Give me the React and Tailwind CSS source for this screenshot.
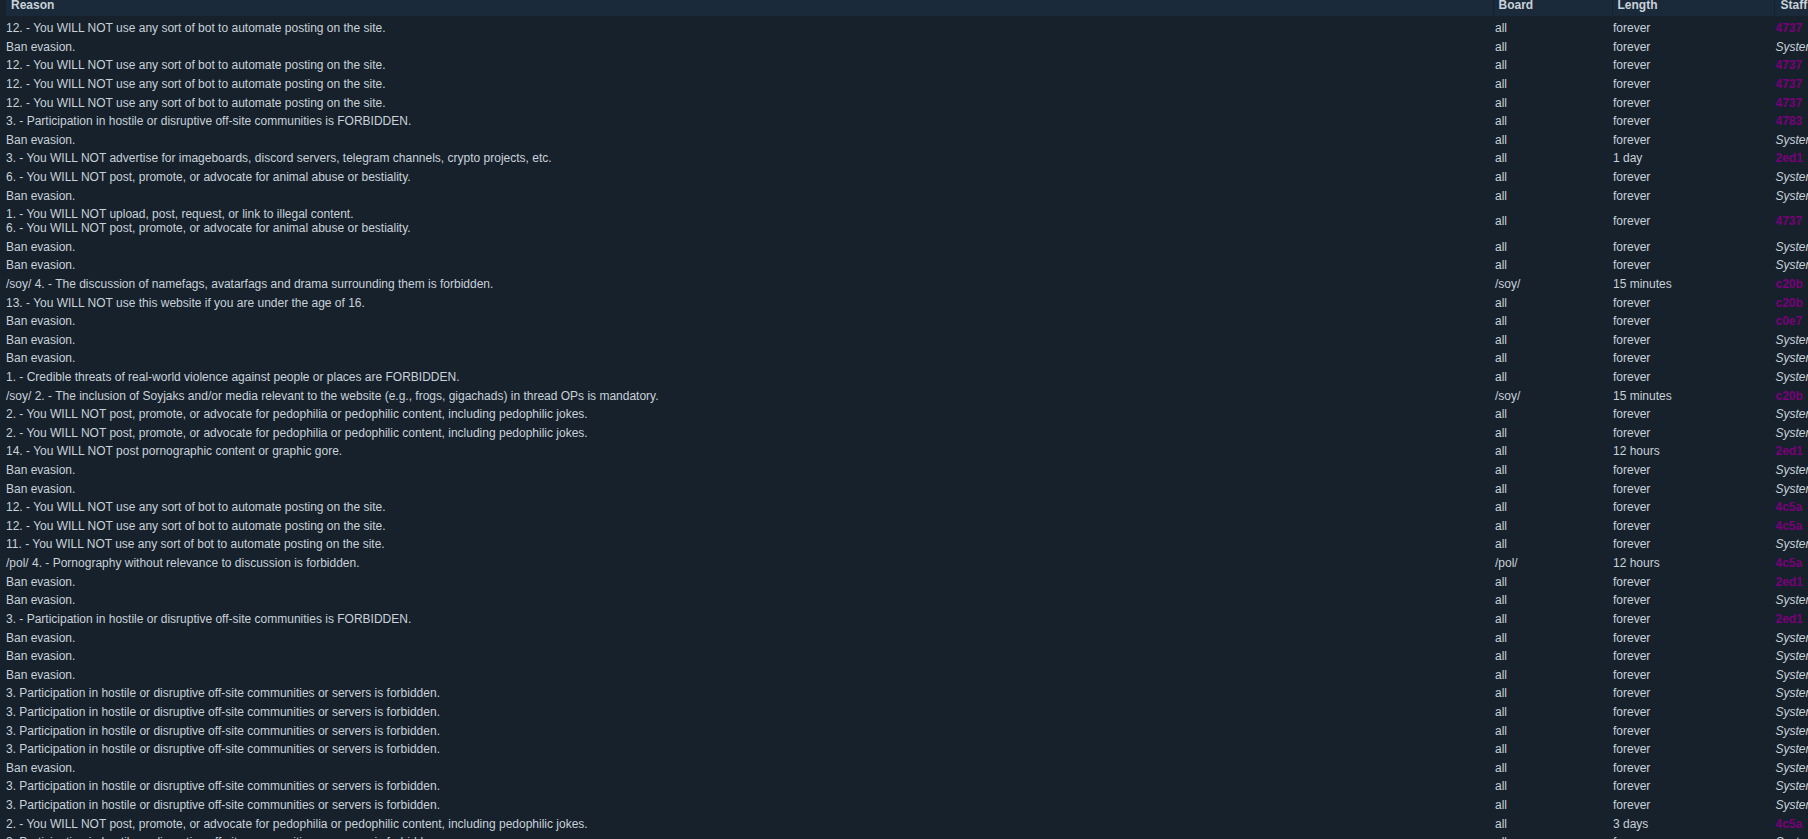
const R12 = "12. - You WILL NOT use any sort of bot to automate posting on the site.";
const R11 = "11. - You WILL NOT use any sort of bot to automate posting on the site.";
const BAN = "Ban evasion.";
const P3 = "3. - Participation in hostile or disruptive off-site communities is FORBIDDEN.";
const S3 = "3. Participation in hostile or disruptive off-site communities or servers is forbidden.";
const A6 = "6. - You WILL NOT post, promote, or advocate for animal abuse or bestiality.";
const P2 = "2. - You WILL NOT post, promote, or advocate for pedophilia or pedophilic content, including pedophilic jokes.";
const SYS = "System";

const rows = [
  [R12, "all", "forever", "4737"],
  [BAN, "all", "forever", SYS],
  [R12, "all", "forever", "4737"],
  [R12, "all", "forever", "4737"],
  [R12, "all", "forever", "4737"],
  [P3, "all", "forever", "4783"],
  [BAN, "all", "forever", SYS],
  ["3. - You WILL NOT advertise for imageboards, discord servers, telegram channels, crypto projects, etc.", "all", "1 day", "2ed1"],
  [A6, "all", "forever", SYS],
  [BAN, "all", "forever", SYS],
  [["1. - You WILL NOT upload, post, request, or link to illegal content.", A6], "all", "forever", "4737"],
  [BAN, "all", "forever", SYS],
  [BAN, "all", "forever", SYS],
  ["/soy/ 4. - The discussion of namefags, avatarfags and drama surrounding them is forbidden.", "/soy/", "15 minutes", "c20b"],
  ["13. - You WILL NOT use this website if you are under the age of 16.", "all", "forever", "c20b"],
  [BAN, "all", "forever", "c0e7"],
  [BAN, "all", "forever", SYS],
  [BAN, "all", "forever", SYS],
  ["1. - Credible threats of real-world violence against people or places are FORBIDDEN.", "all", "forever", SYS],
  ["/soy/ 2. - The inclusion of Soyjaks and/or media relevant to the website (e.g., frogs, gigachads) in thread OPs is mandatory.", "/soy/", "15 minutes", "c20b"],
  [P2, "all", "forever", SYS],
  [P2, "all", "forever", SYS],
  ["14. - You WILL NOT post pornographic content or graphic gore.", "all", "12 hours", "2ed1"],
  [BAN, "all", "forever", SYS],
  [BAN, "all", "forever", SYS],
  [R12, "all", "forever", "4c5a"],
  [R12, "all", "forever", "4c5a"],
  [R11, "all", "forever", SYS],
  ["/pol/ 4. - Pornography without relevance to discussion is forbidden.", "/pol/", "12 hours", "4c5a"],
  [BAN, "all", "forever", "2ed1"],
  [BAN, "all", "forever", SYS],
  [P3, "all", "forever", "2ed1"],
  [BAN, "all", "forever", SYS],
  [BAN, "all", "forever", SYS],
  [BAN, "all", "forever", SYS],
  [S3, "all", "forever", SYS],
  [S3, "all", "forever", SYS],
  [S3, "all", "forever", SYS],
  [S3, "all", "forever", SYS],
  [BAN, "all", "forever", SYS],
  [S3, "all", "forever", SYS],
  [S3, "all", "forever", SYS],
  [P2, "all", "3 days", "4c5a"],
  [S3, "all", "forever", SYS],
];

const cell = "py-[2.42px] align-middle";

export default function App() {
  return (
    <div className="h-[839px] overflow-hidden bg-[#16212c] text-[12px] leading-[13.8px] text-[#c9d1d9] font-['Liberation_Sans',Arial,sans-serif]">
      <table className="ml-[6px] mt-[-4px] w-[1900px] table-fixed border-collapse">
        <colgroup>
          <col className="w-[1487px]" />
          <col className="w-[119px]" />
          <col className="w-[162px]" />
          <col />
        </colgroup>
        <thead>
          <tr className="h-[20px] bg-[#1b2a3a] text-left font-bold">
            <th className="pl-[5px] font-bold">Reason</th>
            <th className="border-l border-[#16212c] pl-[5px] font-bold">Board</th>
            <th className="border-l border-[#16212c] pl-[5px] font-bold">Length</th>
            <th className="border-l border-[#16212c] pl-[6px] font-bold">Staff</th>
          </tr>
          <tr className="h-[3.8px]" aria-hidden="true">
            <td colSpan={4} className="p-0" />
          </tr>
        </thead>
        <tbody>
          {rows.map(([reason, board, length, staff], i) => (
            <tr key={i}>
              <td className={cell}>
                {Array.isArray(reason)
                  ? reason.map((line) => <div key={line}>{line}</div>)
                  : reason}
              </td>
              <td className={cell + " pl-[2px]"}>{board}</td>
              <td className={cell + " pl-[1px]"}>{length}</td>
              <td className={cell + " pl-[1.5px]"}>
                {staff === SYS ? (
                  <em>{staff}</em>
                ) : (
                  <span className="font-bold text-[#7a007a]">{staff}</span>
                )}
              </td>
            </tr>
          ))}
        </tbody>
      </table>
    </div>
  );
}
